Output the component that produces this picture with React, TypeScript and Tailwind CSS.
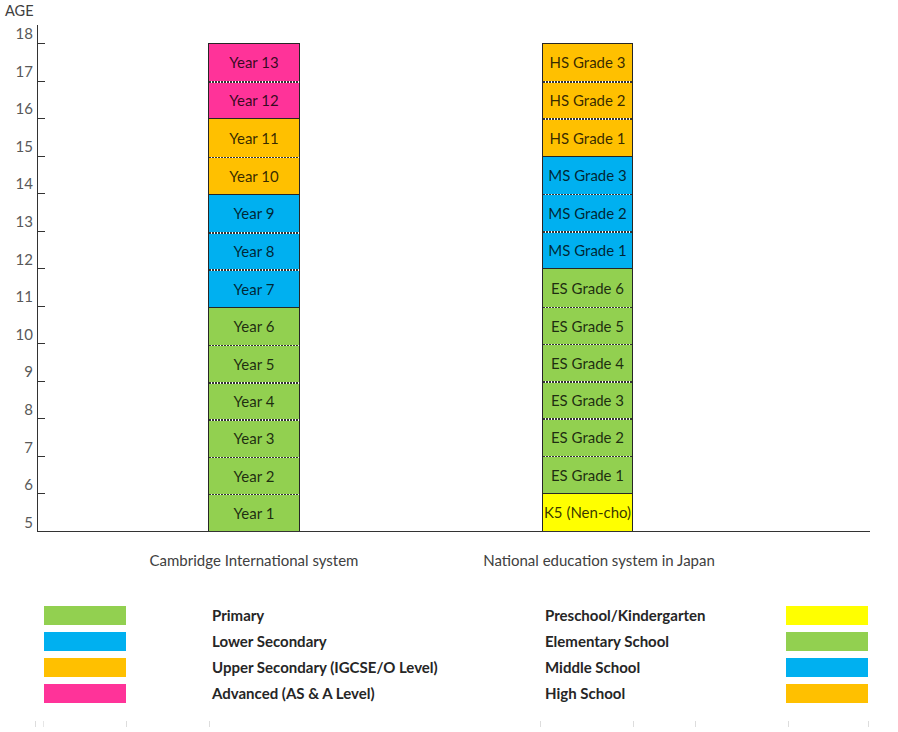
const PINK = "bg-[#ff3399]";
const ORANGE = "bg-[#ffc000]";
const BLUE = "bg-[#00b0f0]";
const GREEN = "bg-[#92d050]";
const YELLOW = "bg-[#ffff00]";

type Cell = { label: string; color: string; start?: boolean };

const cambridge: Cell[] = [
  { label: "Year 13", color: PINK, start: true },
  { label: "Year 12", color: PINK },
  { label: "Year 11", color: ORANGE, start: true },
  { label: "Year 10", color: ORANGE },
  { label: "Year 9", color: BLUE, start: true },
  { label: "Year 8", color: BLUE },
  { label: "Year 7", color: BLUE },
  { label: "Year 6", color: GREEN, start: true },
  { label: "Year 5", color: GREEN },
  { label: "Year 4", color: GREEN },
  { label: "Year 3", color: GREEN },
  { label: "Year 2", color: GREEN },
  { label: "Year 1", color: GREEN },
];

const japan: Cell[] = [
  { label: "HS Grade 3", color: ORANGE, start: true },
  { label: "HS Grade 2", color: ORANGE },
  { label: "HS Grade 1", color: ORANGE },
  { label: "MS Grade 3", color: BLUE, start: true },
  { label: "MS Grade 2", color: BLUE },
  { label: "MS Grade 1", color: BLUE },
  { label: "ES Grade 6", color: GREEN, start: true },
  { label: "ES Grade 5", color: GREEN },
  { label: "ES Grade 4", color: GREEN },
  { label: "ES Grade 3", color: GREEN },
  { label: "ES Grade 2", color: GREEN },
  { label: "ES Grade 1", color: GREEN },
  { label: "K5 (Nen-cho)", color: YELLOW, start: true },
];

const ages = [17, 16, 15, 14, 13, 12, 11, 10, 9, 8, 7, 6, 5];

const leftLegend = [
  { color: GREEN, label: "Primary" },
  { color: BLUE, label: "Lower Secondary" },
  { color: ORANGE, label: "Upper Secondary (IGCSE/O Level)" },
  { color: PINK, label: "Advanced (AS & A Level)" },
];

const rightLegend = [
  { color: YELLOW, label: "Preschool/Kindergarten" },
  { color: GREEN, label: "Elementary School" },
  { color: BLUE, label: "Middle School" },
  { color: ORANGE, label: "High School" },
];

function Bar({ cells, width }: { cells: Cell[]; width: string }) {
  return (
    <div className={`flex flex-col h-[488px] border-x-[1.5px] border-[#262626] ${width}`}>
      {cells.map((c) => (
        <div
          key={c.label}
          className={`flex-1 flex flex-col ${c.color} ${c.start ? "border-t-[1.5px] border-[#262626]" : ""}`}
        >
          {!c.start && (
            <div className="h-[1.5px] w-full bg-[repeating-linear-gradient(90deg,#333333_0_2px,#ffffff_2px_3px)]" />
          )}
          <div className="flex-1 flex items-center justify-center text-[15px] text-black/80 whitespace-nowrap">
            {c.label}
          </div>
        </div>
      ))}
    </div>
  );
}

export default function App() {
  return (
    <div className="w-[898px] h-[732px] bg-white font-['Lato',sans-serif] text-[#404040] overflow-hidden">
      <div className="h-[25px] pl-[5px] pt-[3px] text-[14.5px] leading-[16px] text-[#404040]">AGE</div>

      <div className="flex h-[507px]">
        <div className="w-[37px] flex flex-col pr-[4px] text-[15px] leading-[16px] text-[#595959]">
          <div className="h-[18px] flex items-end justify-end pb-[2px]">18</div>
          {ages.map((a) => (
            <div key={a} className="flex-1 flex items-end justify-end pb-[2px]">
              {a}
            </div>
          ))}
        </div>

        <div className="w-[833px] flex border-l-[1.5px] border-b-[1.5px] border-[#333]">
          <div className="w-[7px] flex flex-col">
            <div className="h-[18px]" />
            {ages.map((a) => (
              <div key={a} className="flex-1 border-t-[1.5px] border-[#333]" />
            ))}
          </div>
          <div className="flex flex-col justify-end">
            <div className="flex items-end">
              <div className="w-[163px]" />
              <Bar cells={cambridge} width="w-[92px]" />
              <div className="w-[242px]" />
              <Bar cells={japan} width="w-[91px]" />
            </div>
          </div>
        </div>
      </div>

      <div className="flex h-[58px] pt-[19px] text-[15px] leading-[18px] text-[#404040]">
        <div className="w-[144px]" />
        <div className="w-[220px] text-center whitespace-nowrap">Cambridge International system</div>
        <div className="w-[114px]" />
        <div className="w-[242px] text-center whitespace-nowrap">National education system in Japan</div>
      </div>

      <div className="h-[16px]" />

      <div className="flex pl-[44px] text-[15px] font-bold text-[#262626]">
        <div className="flex flex-col w-[82px]">
          {leftLegend.map((l) => (
            <div key={l.label} className="h-[26px] pb-[7px]">
              <div className={`h-full ${l.color}`} />
            </div>
          ))}
        </div>
        <div className="w-[86px]" />
        <div className="flex flex-col w-[333px]">
          {leftLegend.map((l) => (
            <div key={l.label} className="h-[26px] leading-[19px] whitespace-nowrap">
              {l.label}
            </div>
          ))}
        </div>
        <div className="flex flex-col w-[241px]">
          {rightLegend.map((l) => (
            <div key={l.label} className="h-[26px] leading-[19px] whitespace-nowrap">
              {l.label}
            </div>
          ))}
        </div>
        <div className="flex flex-col w-[82px]">
          {rightLegend.map((l) => (
            <div key={l.label} className="h-[26px] pb-[7px]">
              <div className={`h-full ${l.color}`} />
            </div>
          ))}
        </div>
      </div>

      <div className="flex mt-[11px] h-[6px]">
        <div className="w-[35px]" />
        <div className="w-px bg-[#dddddd]" />
        <div className="w-[7px]" />
        <div className="w-px bg-[#e6e6e6]" />
        <div className="w-[82px]" />
        <div className="w-px bg-[#dddddd]" />
        <div className="w-[82px]" />
        <div className="w-px bg-[#dddddd]" />
        <div className="w-[330px]" />
        <div className="w-px bg-[#dddddd]" />
        <div className="w-[92px]" />
        <div className="w-px bg-[#dddddd]" />
        <div className="w-[61px]" />
        <div className="w-px bg-[#dddddd]" />
        <div className="w-[92px]" />
        <div className="w-px bg-[#dddddd]" />
        <div className="w-[79px]" />
        <div className="w-px bg-[#dddddd]" />
      </div>
    </div>
  );
}
